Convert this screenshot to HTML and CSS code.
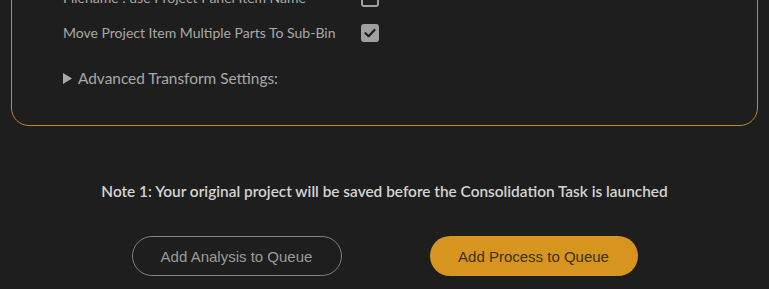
FILE: index.html
```html
<!DOCTYPE html>
<html>
<head>
<meta charset="utf-8">
<link rel="stylesheet" href="styles.css">
</head>
<body>
<div class="panel">
  <div class="row">
    <span class="label">Filename : use Project Panel Item Name</span>
    <span class="box"></span>
  </div>
  <div class="row">
    <span class="label">Move Project Item Multiple Parts To Sub-Bin</span>
    <span class="box checked"><svg width="18" height="18" viewBox="0 0 18 18"><path d="M4.5 9.2 L7.6 12.2 L13.5 6" fill="none" stroke="#1e1e1e" stroke-width="2.2" stroke-linecap="round" stroke-linejoin="round"/></svg></span>
  </div>
  <div class="adv">
    <svg class="tri" width="9" height="11" viewBox="0 0 9 11"><polygon points="0,0 9,5.5 0,11" fill="#a8a8a8"/></svg>
    <span>Advanced Transform Settings:</span>
  </div>
</div>
<p class="note">Note 1: Your original project will be saved before the Consolidation Task is launched</p>
<div class="buttons">
  <button class="btn btn-outline">Add Analysis to Queue</button>
  <button class="btn btn-fill">Add Process to Queue</button>
</div>
</body>
</html>
```
FILE: styles.css
```css
html, body {
  margin: 0;
  padding: 0;
  background: #1e1e1e;
  font-family: Lato, "Noto Sans", sans-serif;
  overflow: hidden;
}
.panel {
  margin: -21px 11px 0;
  border: 1px solid #c08a1e;
  border-radius: 0 0 18px 18px;
  padding: 0 50px 37px 51px;
}
.row {
  display: grid;
  grid-template-columns: 298px 18px;
  align-items: center;
  height: 35px;
}
.label {
  color: #a9a9a9;
  font-size: 14px;
  white-space: nowrap;
}
.box {
  width: 18px;
  height: 18px;
  box-sizing: border-box;
  border: 2px solid #a0a0a0;
  border-radius: 3px;
  display: block;
}
.box.checked {
  background: #a0a0a0;
  border: none;
}
.box svg { display: block; }
.adv {
  margin-top: 18px;
  height: 20px;
  display: flex;
  align-items: center;
  gap: 6px;
  color: #a9a9a9;
  font-size: 15.4px;
}
.tri { display: block; }
.note {
  margin: 55px 0 0;
  text-align: center;
  line-height: 20px;
  color: #d4d4d4;
  font-size: 15.4px;
  font-weight: 600;
}
.buttons {
  margin-top: 35px;
  display: flex;
  justify-content: center;
  gap: 88px;
}
.btn {
  height: 40px;
  border-radius: 20px;
  font-family: "Liberation Sans", Arial, sans-serif;
  font-size: 15px;
  box-sizing: border-box;
}
.btn-outline {
  width: 210px;
  background: transparent;
  border: 1px solid #808080;
  color: #9b9b9b;
}
.btn-fill {
  width: 208px;
  background: #d7951f;
  border: none;
  color: #3a3210;
}
```
